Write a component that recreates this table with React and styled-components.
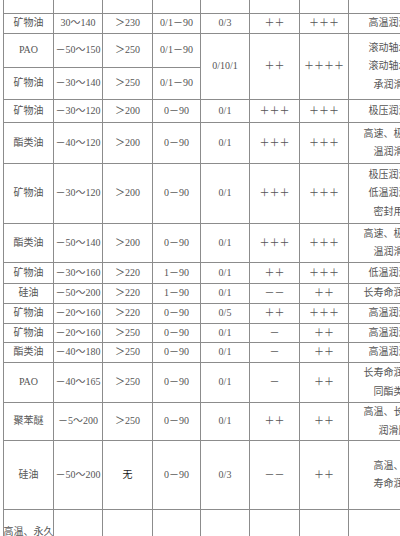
import React from "react";
import styled, { createGlobalStyle } from "styled-components";

const Global = createGlobalStyle`
  html, body {
    margin: 0;
    padding: 0;
    background: #ffffff;
    overflow: hidden;
  }
  body {
    width: 400px;
    height: 536px;
    font-family: "Liberation Serif", "Noto Sans CJK SC", serif;
  }
`;

const Page = styled.div`
  width: 400px;
  height: 536px;
  overflow: hidden;
  padding-left: 3px;
  box-sizing: border-box;
`;

const Grid = styled.div`
  display: grid;
  grid-template-columns: 50px 49px 50px 48px 49px 50px 49px 90px;
  grid-template-rows: 14px 20px 34px 32px 23px 41px 60px 39px 21px 20px 20px 19px 20px 40px 38px 69px 80px;
  border-left: 1px solid #8c8c8c;
  width: max-content;
`;

const Cell = styled.div`
  box-sizing: border-box;
  border-right: 1px solid #8c8c8c;
  border-bottom: 1px solid #8c8c8c;
  display: flex;
  align-items: ${(p) => (p.$top ? "flex-start" : "center")};
  justify-content: center;
  padding-top: ${(p) => (p.$top ? "13px" : "0")};
  text-align: center;
  font-size: 10px;
  line-height: 18.5px;
  color: ${(p) => (p.$dark ? "#1a1a1a" : "#555")};
  white-space: nowrap;
  overflow: hidden;
  grid-row: ${(p) => (p.$span ? `span ${p.$span}` : "auto")};
`;

const Lines = styled.div`
  display: flex;
  flex-direction: column;
  align-items: center;
`;

const rows = [
  { c: ["", "", "", "", "", "", "", ""] },
  { c: ["矿物油", "30～140", "＞230", "0/1－90", "0/3", "＋＋", "＋＋＋", ["高温润滑脂"]] },
  {
    c: ["PAO", "－50～150", "＞250", "0/1－90", "0/10/1", "＋＋", "＋＋＋＋", ["滚动轴承润", "滚动轴承润", "承润滑脂"]],
    span: [4, 5, 6, 7],
  },
  { c: ["矿物油", "－30～140", "＞250", "0/1－90"] },
  { c: ["矿物油", "－30～120", "＞200", "0－90", "0/1", "＋＋＋", "＋＋＋", ["极压润滑脂"]] },
  { c: ["酯类油", "－40～120", "＞200", "0－90", "0/1", "＋＋＋", "＋＋＋", ["高速、极压低", "温润滑脂"]] },
  { c: ["矿物油", "－30～120", "＞200", "0－90", "0/1", "＋＋＋", "＋＋＋", ["极压润滑脂", "低温润滑脂", "密封用脂"]] },
  { c: ["酯类油", "－50～140", "＞200", "0－90", "0/1", "＋＋＋", "＋＋＋", ["高速、极压低", "温润滑脂"]] },
  { c: ["矿物油", "－30～160", "＞220", "1－90", "0/1", "＋＋", "＋＋＋", ["低温润滑脂"]] },
  { c: ["硅油", "－50～200", "＞220", "1－90", "0/1", "－－", "＋＋", ["长寿命润滑脂"]] },
  { c: ["矿物油", "－20～160", "＞220", "0－90", "0/5", "＋＋", "＋＋＋", ["高温润滑脂"]] },
  { c: ["矿物油", "－20～160", "＞250", "0－90", "0/1", "－", "＋＋", ["高温润滑脂"]] },
  { c: ["酯类油", "－40～180", "＞250", "0－90", "0/1", "－", "＋＋", ["高温润滑脂"]] },
  { c: ["PAO", "－40～165", "＞250", "0－90", "0/1", "－", "＋＋", ["长寿命润滑脂", "同酯类脂"]] },
  { c: ["聚苯醚", "－5～200", "＞250", "0－90", "0/1", "＋＋", "＋＋", ["高温、长寿命", "润滑脂"]] },
  { c: ["硅油", "－50～200", "无", "0－90", "0/3", "－－", "＋＋", ["高温、长", "寿命润滑"]] },
  { c: [["高温、永久", "密封脂"], "", "", "", "", "", "", ""], top: [0] },
];

export default function App() {
  return (
    <Page>
      <Global />
      <Grid>
        {rows.map((r, ri) =>
          r.c.map((v, ci) => (
            <Cell
              key={`${ri}-${ci}`}
              $span={r.span && r.span.includes(ci) ? 2 : undefined}
              $top={r.top && r.top.includes(ci)}
              $dark={v === "无"}
            >
              {Array.isArray(v) ? (
                <Lines>
                  {v.map((l, li) => (
                    <span key={li}>{l}</span>
                  ))}
                </Lines>
              ) : (
                v
              )}
            </Cell>
          ))
        )}
      </Grid>
    </Page>
  );
}
